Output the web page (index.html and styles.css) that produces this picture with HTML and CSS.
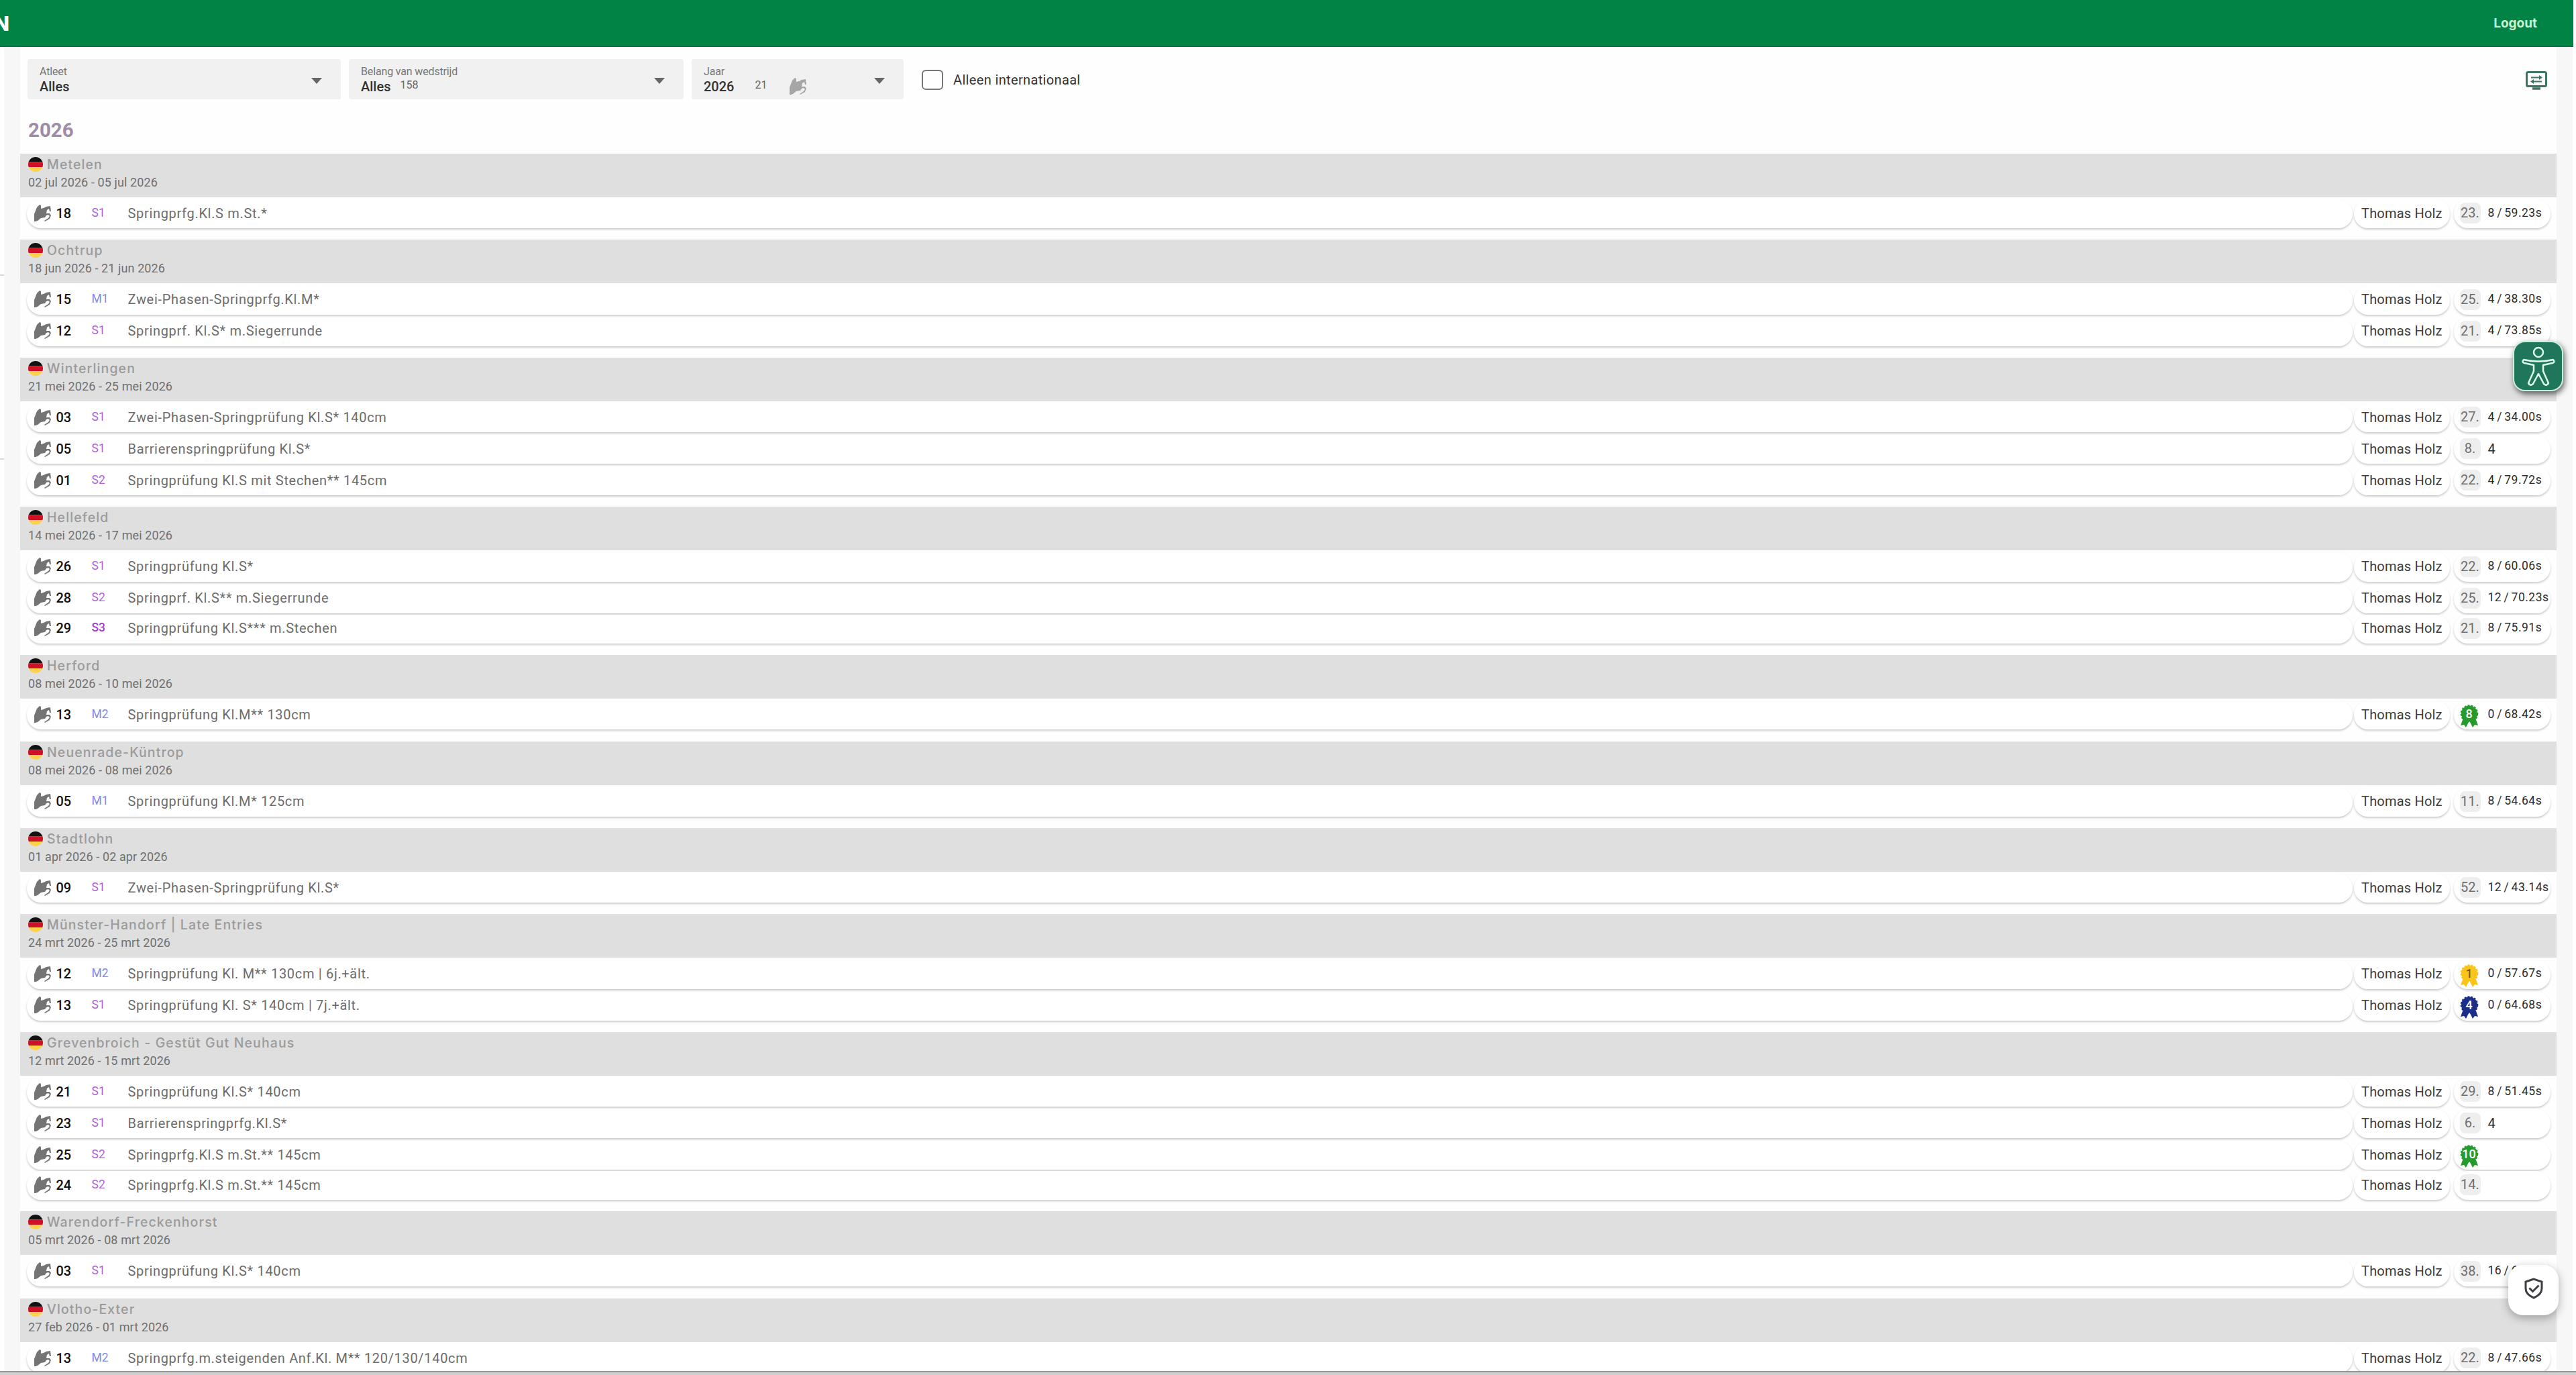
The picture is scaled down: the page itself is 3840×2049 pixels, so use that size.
FILE: index.html
```html
<!DOCTYPE html>
<html lang="nl">
<head>
    <meta charset="UTF-8" />
    <meta name="viewport" content="width=device-width, initial-scale=1.0"/>
    <title>Resultaten</title>
    <link rel="stylesheet" href="styles.css">
</head>
<body>
<svg class="sprite">
    <symbol id="horse" viewBox="0 0 26 26">
        <path d="M1 25V14l2-5 2-5 4-4 2 1v5l4-1 4-2 6-1 1 8h-2l-1-4-3 2-1 5h5l2 3-2 5-7 4-1-1 6-4 2-3-2-2-3 1-2 3-6 1-5 4-3 1z"/>
    </symbol>
    <symbol id="flag" viewBox="0 0 22 22">
        <clipPath id="disc"><circle cx="11" cy="11" r="11"/></clipPath>
        <g clip-path="url(#disc)">
            <path fill="#111" d="M0 0h22v7.5H0z"/>
            <path fill="#cf1126" d="M0 7.5h22v7.5H0z"/>
            <path fill="#fdd04e" d="M0 15h22v7H0z"/>
        </g>
    </symbol>
    <symbol id="ribbon" viewBox="0 0 28 34">
        <path d="M5 20 1 31l5-1 3 4 5-10 5 10 3-4 5 1-4-11z"/>
        <circle cx="14" cy="13.500" r="12"/>
        <circle cx="14" cy="13.500" r="12.300" fill="none" stroke="currentColor" stroke-width="2" stroke-dasharray="3 2"/>
    </symbol>
</svg>

<header class="topbar">
    <span class="brand">N</span>
    <a class="logout">Logout</a>
</header>

<main class="page">
    <aside class="side"><i class="tick tick-one"></i><i class="tick tick-two"></i></aside>
    <div class="panel">
        <div class="filters">
            <div class="select select-athlete">
                <div><div class="label">Atleet</div><div class="value">Alles</div></div>
                <i class="arrow"></i>
            </div>
            <div class="select select-level">
                <div><div class="label">Belang van wedstrijd</div><div class="value">Alles <small>158</small></div></div>
                <i class="arrow"></i>
            </div>
            <div class="select select-year">
                <div><div class="label">Jaar</div><div class="value">2026 <small class="count">21</small><svg class="horse"><use href="#horse"/></svg></div></div>
                <i class="arrow"></i>
            </div>
            <label class="check"><i class="box"></i>Alleen internationaal</label>
            <svg class="screen" viewBox="0 0 32 28" fill="none" stroke="#3f7460" stroke-width="3">
                <rect x="1.500" y="1.500" width="29" height="21" rx="2"/>
                <path d="M10 26h12" stroke-width="3.500"/>
                <path d="M8 9.500h15M24 15.500H9" stroke-width="2"/>
                <path d="m20 6 5 3.500-5 3.500zM12 12l-5 3.500 5 3.500z" fill="#3f7460" stroke="none"/>
            </svg>
        </div>

        <h1 class="year">2026</h1>

        <section class="event">
            <div class="event-head">
                <h2><svg class="flag"><use href="#flag"/></svg>Metelen</h2>
                <p>02 jul 2026 - 05 jul 2026</p>
            </div>
            <div class="row">
                <div class="show"><svg class="horse"><use href="#horse"/></svg><b>18</b><span class="level s">S1</span><span class="title">Springprfg.Kl.S m.St.*</span></div>
                <div class="rider">Thomas Holz</div>
                <div class="result"><span class="rank">23.</span><span class="score">8 / 59.23s</span></div>
            </div>
        </section>

        <section class="event">
            <div class="event-head">
                <h2><svg class="flag"><use href="#flag"/></svg>Ochtrup</h2>
                <p>18 jun 2026 - 21 jun 2026</p>
            </div>
            <div class="row">
                <div class="show"><svg class="horse"><use href="#horse"/></svg><b>15</b><span class="level m">M1</span><span class="title">Zwei-Phasen-Springprfg.Kl.M*</span></div>
                <div class="rider">Thomas Holz</div>
                <div class="result"><span class="rank">25.</span><span class="score">4 / 38.30s</span></div>
            </div>
            <div class="row">
                <div class="show"><svg class="horse"><use href="#horse"/></svg><b>12</b><span class="level s">S1</span><span class="title">Springprf. Kl.S* m.Siegerrunde</span></div>
                <div class="rider">Thomas Holz</div>
                <div class="result"><span class="rank">21.</span><span class="score">4 / 73.85s</span></div>
            </div>
        </section>

        <section class="event">
            <div class="event-head">
                <h2><svg class="flag"><use href="#flag"/></svg>Winterlingen</h2>
                <p>21 mei 2026 - 25 mei 2026</p>
            </div>
            <div class="row">
                <div class="show"><svg class="horse"><use href="#horse"/></svg><b>03</b><span class="level s">S1</span><span class="title">Zwei-Phasen-Springprüfung Kl.S* 140cm</span></div>
                <div class="rider">Thomas Holz</div>
                <div class="result"><span class="rank">27.</span><span class="score">4 / 34.00s</span></div>
            </div>
            <div class="row">
                <div class="show"><svg class="horse"><use href="#horse"/></svg><b>05</b><span class="level s">S1</span><span class="title">Barrierenspringprüfung Kl.S*</span></div>
                <div class="rider">Thomas Holz</div>
                <div class="result"><span class="rank">8.</span><span class="score faults">4</span></div>
            </div>
            <div class="row">
                <div class="show"><svg class="horse"><use href="#horse"/></svg><b>01</b><span class="level s">S2</span><span class="title">Springprüfung Kl.S mit Stechen** 145cm</span></div>
                <div class="rider">Thomas Holz</div>
                <div class="result"><span class="rank">22.</span><span class="score">4 / 79.72s</span></div>
            </div>
        </section>

        <section class="event">
            <div class="event-head">
                <h2><svg class="flag"><use href="#flag"/></svg>Hellefeld</h2>
                <p>14 mei 2026 - 17 mei 2026</p>
            </div>
            <div class="row">
                <div class="show"><svg class="horse"><use href="#horse"/></svg><b>26</b><span class="level s">S1</span><span class="title">Springprüfung Kl.S*</span></div>
                <div class="rider">Thomas Holz</div>
                <div class="result"><span class="rank">22.</span><span class="score">8 / 60.06s</span></div>
            </div>
            <div class="row">
                <div class="show"><svg class="horse"><use href="#horse"/></svg><b>28</b><span class="level s">S2</span><span class="title">Springprf. Kl.S** m.Siegerrunde</span></div>
                <div class="rider">Thomas Holz</div>
                <div class="result"><span class="rank">25.</span><span class="score">12 / 70.23s</span></div>
            </div>
            <div class="row tight">
                <div class="show"><svg class="horse"><use href="#horse"/></svg><b>29</b><span class="level s3">S3</span><span class="title">Springprüfung Kl.S*** m.Stechen</span></div>
                <div class="rider">Thomas Holz</div>
                <div class="result"><span class="rank">21.</span><span class="score">8 / 75.91s</span></div>
            </div>
        </section>

        <section class="event roomy">
            <div class="event-head">
                <h2><svg class="flag"><use href="#flag"/></svg>Herford</h2>
                <p>08 mei 2026 - 10 mei 2026</p>
            </div>
            <div class="row">
                <div class="show"><svg class="horse"><use href="#horse"/></svg><b>13</b><span class="level m">M2</span><span class="title">Springprüfung Kl.M** 130cm</span></div>
                <div class="rider">Thomas Holz</div>
                <div class="result"><span class="badge green"><svg><use href="#ribbon"/></svg><em>8</em></span><span class="score">0 / 68.42s</span></div>
            </div>
        </section>

        <section class="event">
            <div class="event-head">
                <h2><svg class="flag"><use href="#flag"/></svg>Neuenrade-Küntrop</h2>
                <p>08 mei 2026 - 08 mei 2026</p>
            </div>
            <div class="row">
                <div class="show"><svg class="horse"><use href="#horse"/></svg><b>05</b><span class="level m">M1</span><span class="title">Springprüfung Kl.M* 125cm</span></div>
                <div class="rider">Thomas Holz</div>
                <div class="result"><span class="rank">11.</span><span class="score">8 / 54.64s</span></div>
            </div>
        </section>

        <section class="event">
            <div class="event-head">
                <h2><svg class="flag"><use href="#flag"/></svg>Stadtlohn</h2>
                <p>01 apr 2026 - 02 apr 2026</p>
            </div>
            <div class="row">
                <div class="show"><svg class="horse"><use href="#horse"/></svg><b>09</b><span class="level s">S1</span><span class="title">Zwei-Phasen-Springprüfung Kl.S*</span></div>
                <div class="rider">Thomas Holz</div>
                <div class="result"><span class="rank">52.</span><span class="score">12 / 43.14s</span></div>
            </div>
        </section>

        <section class="event">
            <div class="event-head">
                <h2><svg class="flag"><use href="#flag"/></svg>Münster-Handorf | Late Entries</h2>
                <p>24 mrt 2026 - 25 mrt 2026</p>
            </div>
            <div class="row">
                <div class="show"><svg class="horse"><use href="#horse"/></svg><b>12</b><span class="level m">M2</span><span class="title">Springprüfung Kl. M** 130cm | 6j.+ält.</span></div>
                <div class="rider">Thomas Holz</div>
                <div class="result"><span class="badge gold"><svg><use href="#ribbon"/></svg><em>1</em></span><span class="score">0 / 57.67s</span></div>
            </div>
            <div class="row">
                <div class="show"><svg class="horse"><use href="#horse"/></svg><b>13</b><span class="level s">S1</span><span class="title">Springprüfung Kl. S* 140cm | 7j.+ält.</span></div>
                <div class="rider">Thomas Holz</div>
                <div class="result"><span class="badge blue"><svg><use href="#ribbon"/></svg><em>4</em></span><span class="score">0 / 64.68s</span></div>
            </div>
        </section>

        <section class="event">
            <div class="event-head">
                <h2><svg class="flag"><use href="#flag"/></svg>Grevenbroich - Gestüt Gut Neuhaus</h2>
                <p>12 mrt 2026 - 15 mrt 2026</p>
            </div>
            <div class="row">
                <div class="show"><svg class="horse"><use href="#horse"/></svg><b>21</b><span class="level s">S1</span><span class="title">Springprüfung Kl.S* 140cm</span></div>
                <div class="rider">Thomas Holz</div>
                <div class="result"><span class="rank">29.</span><span class="score">8 / 51.45s</span></div>
            </div>
            <div class="row">
                <div class="show"><svg class="horse"><use href="#horse"/></svg><b>23</b><span class="level s">S1</span><span class="title">Barrierenspringprfg.Kl.S*</span></div>
                <div class="rider">Thomas Holz</div>
                <div class="result"><span class="rank">6.</span><span class="score faults">4</span></div>
            </div>
            <div class="row">
                <div class="show"><svg class="horse"><use href="#horse"/></svg><b>25</b><span class="level s">S2</span><span class="title">Springprfg.Kl.S m.St.** 145cm</span></div>
                <div class="rider">Thomas Holz</div>
                <div class="result"><span class="badge green"><svg><use href="#ribbon"/></svg><em>10</em></span></div>
            </div>
            <div class="row tight">
                <div class="show"><svg class="horse"><use href="#horse"/></svg><b>24</b><span class="level s">S2</span><span class="title">Springprfg.Kl.S m.St.** 145cm</span></div>
                <div class="rider">Thomas Holz</div>
                <div class="result"><span class="rank">14.</span></div>
            </div>
        </section>

        <section class="event roomy">
            <div class="event-head">
                <h2><svg class="flag"><use href="#flag"/></svg>Warendorf-Freckenhorst</h2>
                <p>05 mrt 2026 - 08 mrt 2026</p>
            </div>
            <div class="row">
                <div class="show"><svg class="horse"><use href="#horse"/></svg><b>03</b><span class="level s">S1</span><span class="title">Springprüfung Kl.S* 140cm</span></div>
                <div class="rider">Thomas Holz</div>
                <div class="result"><span class="rank">38.</span><span class="score">16 / 6</span></div>
            </div>
        </section>

        <section class="event">
            <div class="event-head">
                <h2><svg class="flag"><use href="#flag"/></svg>Vlotho-Exter</h2>
                <p>27 feb 2026 - 01 mrt 2026</p>
            </div>
            <div class="row">
                <div class="show"><svg class="horse"><use href="#horse"/></svg><b>13</b><span class="level m">M2</span><span class="title">Springprfg.m.steigenden Anf.Kl. M** 120/130/140cm</span></div>
                <div class="rider">Thomas Holz</div>
                <div class="result"><span class="rank">22.</span><span class="score">8 / 47.66s</span></div>
            </div>
        </section>
    </div>
</main>
<footer class="bottom"></footer>

<button class="float access">
    <svg viewBox="0 0 74 74" fill="none" stroke="#d9fbe9" stroke-width="2.500" stroke-linejoin="round">
        <circle cx="37" cy="16" r="7"/>
        <path d="M15 27q22 5 44 0 3 4-1 5l-14 3v9l8 18q-3 5-7 1l-8-15-8 15q-4 4-7-1l8-18v-9l-14-3q-4-1-1-5z"/>
    </svg>
</button>
<button class="float shield">
    <svg viewBox="0 0 28 32" fill="none" stroke="#3c3e42" stroke-width="3">
        <path d="M14 2 2 6v10c0 7 5 11 12 14 7-3 12-7 12-14V6z"/>
        <path d="m7.500 15.500 5 5 9-9"/>
    </svg>
</button>
</body>
</html>
```
FILE: styles.css
```css
html, body { height: 100%; margin: 0; padding: 0; }
body {
    height: 100vh; overflow: hidden;
    display: flex; flex-direction: column;
    background: #fff; color: #333;
    font-family: Roboto, sans-serif; font-size: 20px;
}
h1, h2, p { margin: 0; }
.sprite { position: absolute; width: 0; height: 0; }

.topbar {
    flex: none; height: 70px; margin-right: 4px; padding-right: 54px; box-sizing: border-box;
    display: flex; align-items: center; justify-content: space-between;
    background: #018345; border-bottom: 1px solid #146c42; overflow: hidden;
}
.brand { margin-left: -9px; font: 800 30px/1 Inter, sans-serif; color: #fff; }
.logout { font: 700 19px/1 Inter, sans-serif; color: #c9f2d2; margin-top: -1px; }

.page { flex: 1; min-height: 0; display: flex; overflow: hidden; background: #f7f7f7; margin-right: 5px; }
.side { width: 6px; margin-right: 24px; background: #fff; }
.tick { display: block; height: 2px; background: #d8d8d8; }
.tick-one { margin-top: 339px; }
.tick-two { margin-top: 272px; }
.panel { flex: 1; margin-right: 24px; background: #fefefe; }

/* Filters */
.filters { display: flex; height: 60px; padding: 18px 14px 0 11px; }
.select {
    height: 60px; box-sizing: border-box; padding: 10px 28px 0 18px; border-radius: 4px;
    display: flex; justify-content: space-between; background: #f1f1f1; white-space: nowrap;
}
.select-athlete { width: 467px; margin-right: 12px; }
.select-level { width: 499px; margin-right: 12px; }
.select-year { width: 316px; margin-right: 27px; }
.label { font-size: 16px; line-height: 18px; letter-spacing: -.15px; color: #777; }
.value { display: flex; font-size: 20px; line-height: 26px; font-weight: 500; color: #333; }
.value small { margin-left: 14px; font-size: 16px; line-height: 22px; font-weight: 400; color: #666; }
.value small.count { margin: 0 33px 0 31px; }
.value .horse { fill: #a6a6a6; }
.arrow { margin-top: 18px; width: 0; height: 0; border: 8px solid transparent; border-top: 9px solid #666; border-bottom: 0; }
.check { display: flex; align-items: center; color: #333; font-size: 20px; letter-spacing: .35px; padding-top: 1px; }
.box { width: 28px; height: 26px; margin-right: 15px; border: 2px solid #777; border-radius: 6px; }
.screen { width: 32px; height: 28px; margin: 18px 0 0 auto; }
.year { height: 81px; font-size: 29.5px; line-height: 93px; padding-left: 12px; font-weight: 700; color: #9e8ca6; }

/* Events */
.event { padding-bottom: 17px; }
.event.roomy { padding-bottom: 18px; }
.event-head { height: 65px; margin-bottom: 3px; padding: 3px 12px 0; box-sizing: border-box; background: #dfdfdf; }
.event + .event .event-head { margin-bottom: 3.5px; }
.event-head h2 {
    display: flex; align-items: center; height: 26px;
    font: 500 19.5px/26px Inter, sans-serif; letter-spacing: 1.1px; color: #9b9b9b;
}
.event-head p { font-size: 18px; line-height: 27px; letter-spacing: .1px; color: #707070; }
.flag { width: 22px; height: 22px; margin-right: 6px; }

.row { display: flex; padding: 0 9.500px; height: 43px; }
.row + .row { margin-top: 4px; }
.row + .row.tight { margin-top: 2px; }
.show, .rider, .result {
    display: flex; align-items: center; height: 43px; box-sizing: border-box; padding-bottom: 2px;
    background: #fff; border-radius: 21px; box-shadow: 0 2px 3px rgba(0,0,0,.2); white-space: nowrap;
}
.show { flex: 1; padding-left: 10px; }
.horse { width: 26px; height: 26px; fill: #747474; }
.show b { width: 53px; margin-left: 8px; font-weight: 500; color: #111; }
.level { width: 54px; margin-top: -2px; font-size: 17.5px; }
.level.m { color: #8189ea; }
.level.s { color: #ae63da; }
.level.s3 { color: #a838d0; font-weight: 500; }
.title { color: #6c6c6c; letter-spacing: .68px; }
.rider { width: 143px; margin: 0 5.500px 0 2px; padding-left: 11px; color: #3c3c3c; letter-spacing: .2px; }
.result { width: 144px; padding-left: 9px; }
.rank { width: 31px; height: 31px; line-height: 31px; border-radius: 8px; background: #eee; color: #6f6f6f; text-align: center; margin-right: 11px; }
.score { font-size: 17.5px; color: #2c2c2c; margin-top: -2px; letter-spacing: .5px; word-spacing: -1.5px; }
.score.faults { font-size: 20px; margin-top: 0; }
.badge { position: relative; width: 28px; height: 34px; margin: 5px 14px 0 0; }
.badge svg { width: 28px; height: 34px; }
.badge em { position: absolute; inset: 0 0 auto; font: 500 18px/27px Roboto, sans-serif; text-align: center; color: #fff; }
.green { fill: #279a2f; color: #279a2f; }
.gold { fill: #fac51b; color: #fac51b; }
.gold em { color: #7a5a10; }
.blue { fill: #1b2f88; color: #1b2f88; }

.bottom { flex: none; height: 6px; box-sizing: border-box; border-top: 2px solid #969696; background: #cfcfcf; }

/* Floating buttons */
.float { position: fixed; padding: 0; box-sizing: border-box; width: 75px; height: 75px; display: flex; align-items: center; justify-content: center; }
.access { right: 19px; top: 508px; border: 2px solid #cdeedd; border-radius: 18px; background: #20765a; box-shadow: 2px 4px 8px rgba(0,0,0,.6); }
.access svg { width: 74px; height: 74px; flex: none; }
.shield { right: 26px; top: 1885px; border: 0; border-radius: 22px; background: #fff; box-shadow: 0 4px 14px rgba(0,0,0,.3); }
.shield svg { width: 28px; height: 32px; margin-top: -5px; }
```
